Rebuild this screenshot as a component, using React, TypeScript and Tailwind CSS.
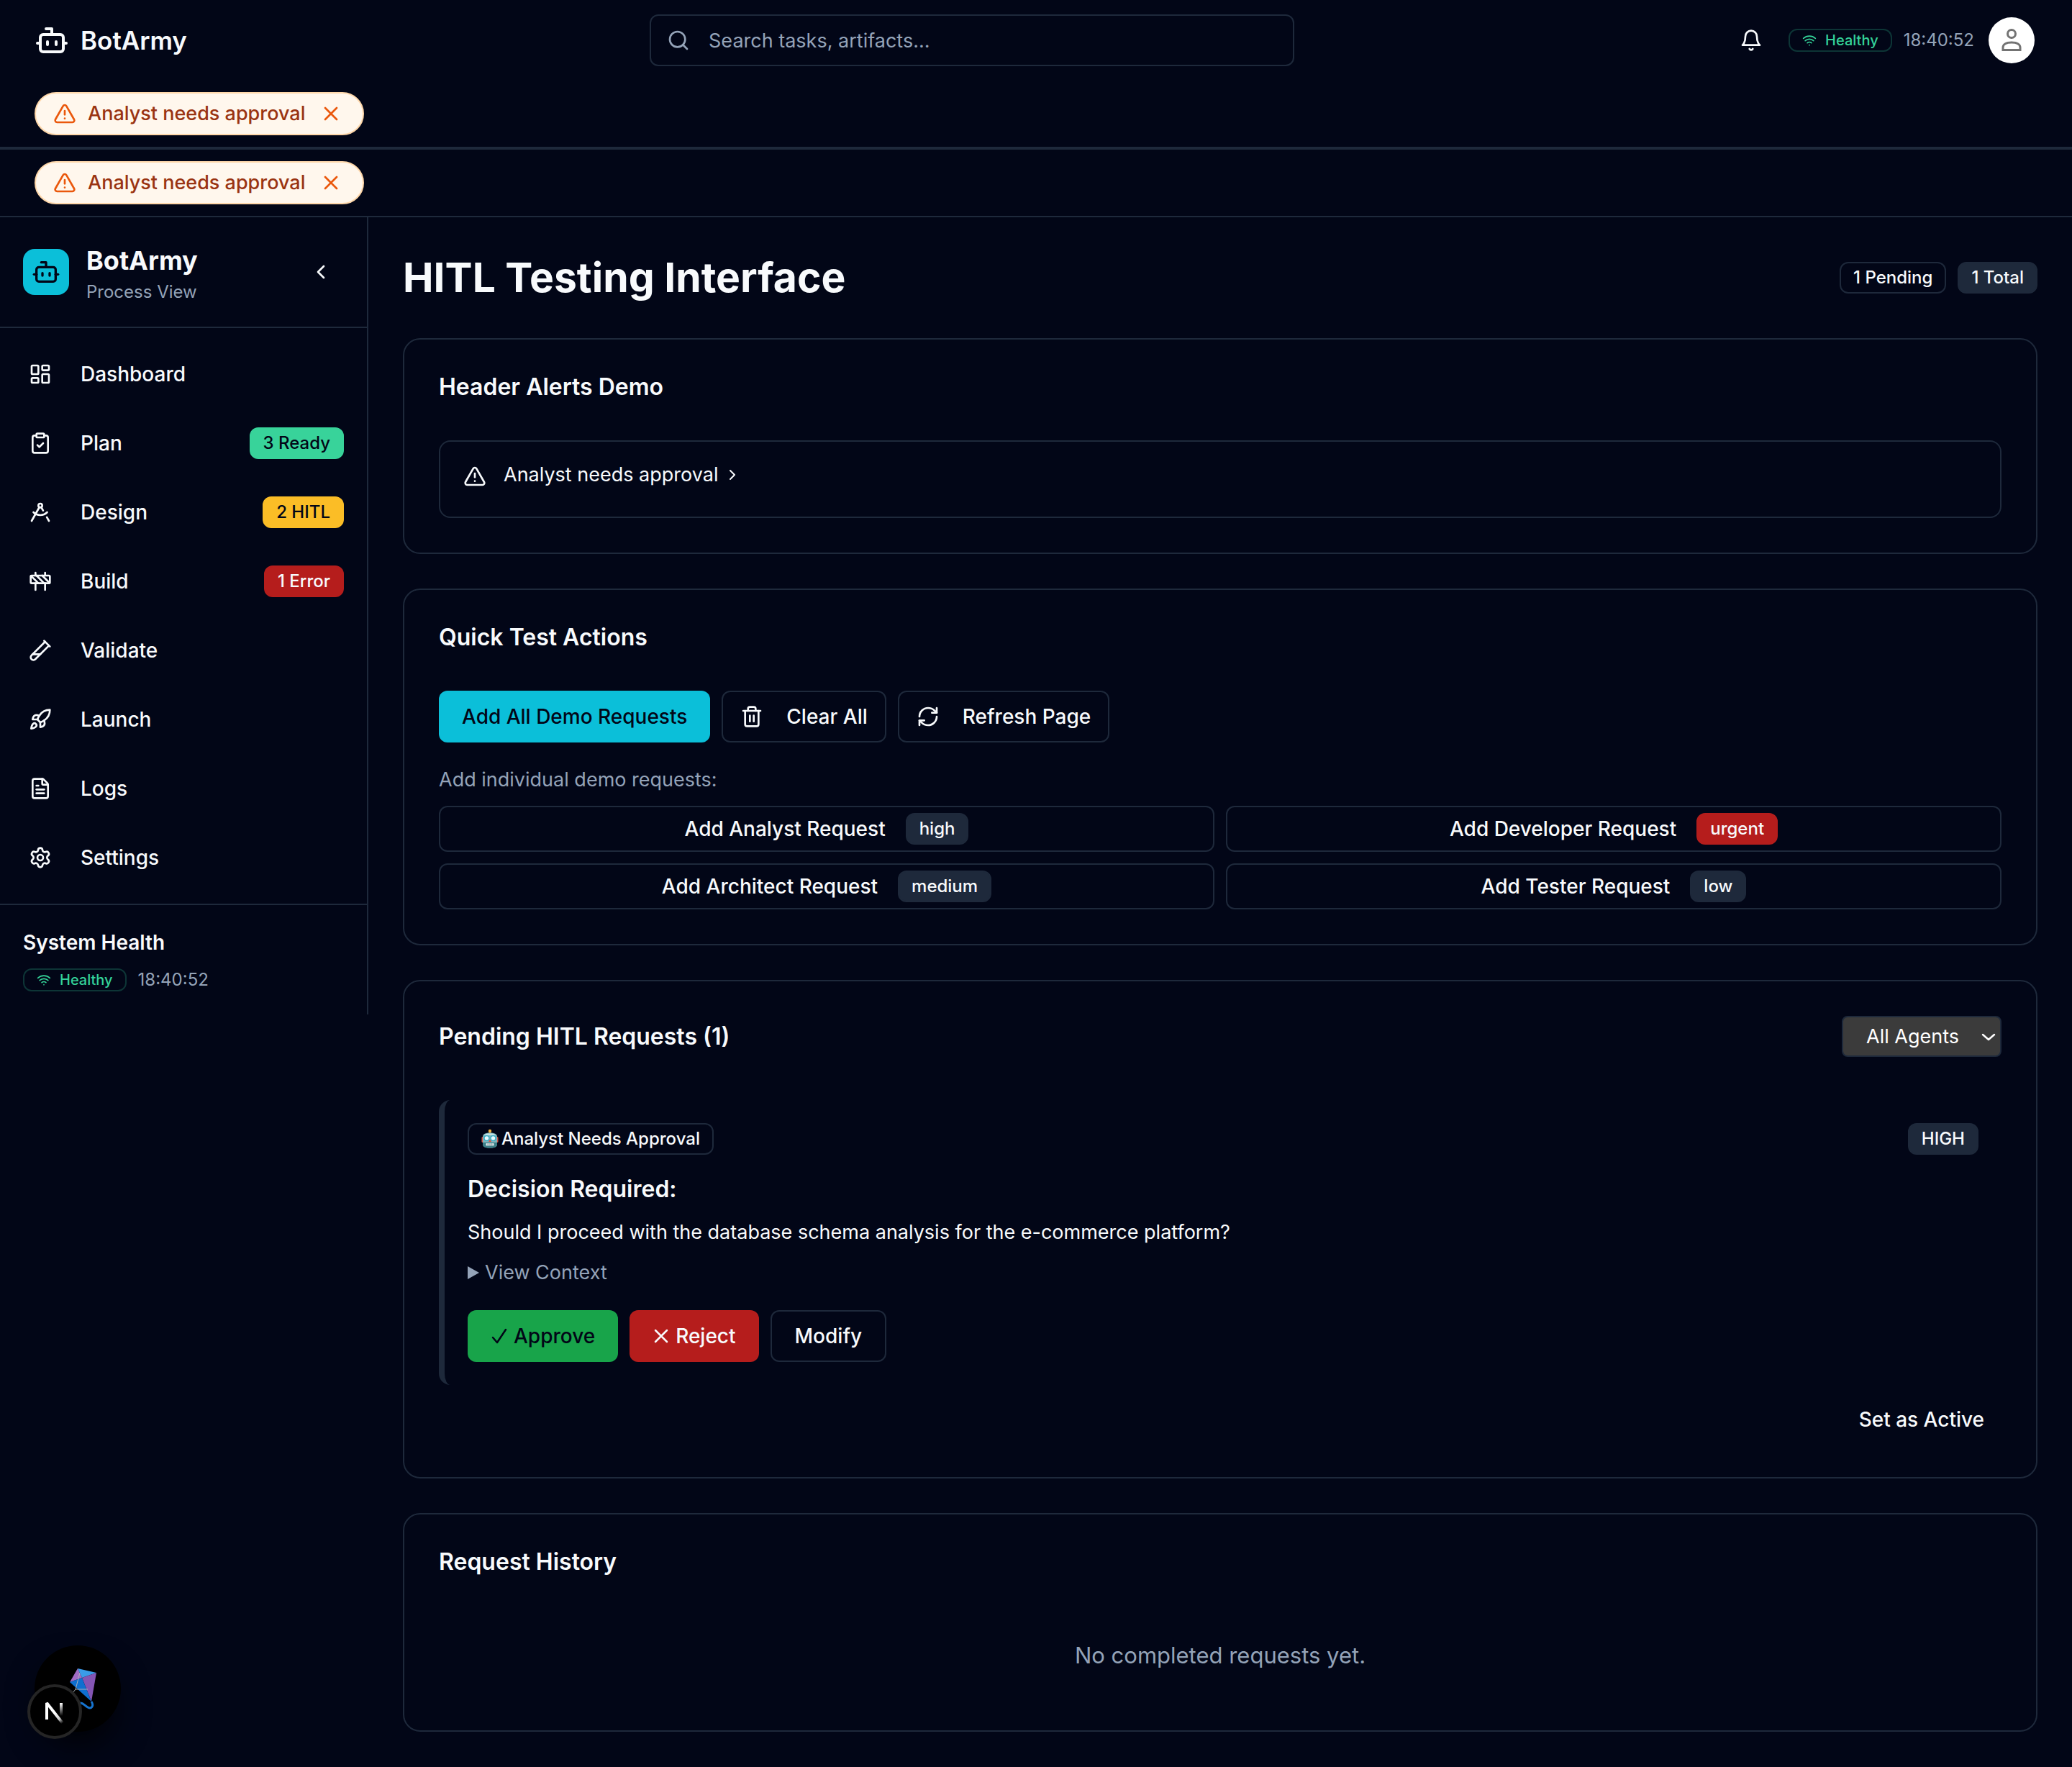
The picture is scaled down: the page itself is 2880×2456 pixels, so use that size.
import React from "react";
import {
  Bot,
  ChevronLeft,
  ChevronRight,
  ClipboardCheck,
  Construction,
  DraftingCompass,
  FileText,
  LayoutDashboard,
  RefreshCw,
  Rocket,
  Search,
  Settings,
  TestTubeDiagonal,
  Trash2,
  TriangleAlert,
  Wifi,
  X,
} from "lucide-react";

const badgeBase =
  "inline-flex h-11 shrink-0 items-center justify-center rounded-xl border-2 px-[17px] text-[24px] leading-8 font-medium whitespace-nowrap";

const badgeTones = {
  outline: "border-[#1e293b] text-slate-50",
  muted: "border-[#1e293b] bg-[#1e293b] text-slate-50",
  danger: "border-[#b51d1c] bg-[#b51d1c] text-slate-50",
  success: "border-[#38d39a] bg-[#38d39a] text-[#020617]",
  warning: "border-[#fbbd26] bg-[#fbbd26] text-[#020617]",
};

type Tone = keyof typeof badgeTones;

function Badge({ tone, children }: { tone: Tone; children: React.ReactNode }) {
  return <span className={`${badgeBase} ${badgeTones[tone]}`}>{children}</span>;
}

function HealthStatus() {
  return (
    <div className="flex items-center gap-4">
      <span className="inline-flex h-8 items-center gap-3 rounded-xl border-2 border-[#0d3536] px-[17px] text-[20px] leading-7 font-medium text-[#34d399]">
        <Wifi className="size-5" aria-hidden="true" />
        Healthy
      </span>
      <time className="text-[24px] leading-8 text-[#94a3b8]">18:40:52</time>
    </div>
  );
}

function AlertPill() {
  return (
    <div className="flex border-b-2 border-[#1e293b] px-12 py-4">
      <div
        role="alert"
        className="flex items-center gap-4 rounded-full border-2 border-[#fed7aa] bg-[#fff7ed] px-6 py-2 text-[27px] leading-10 font-medium text-[#9a3412]"
      >
        <TriangleAlert className="size-8 text-[#ea580c]" aria-hidden="true" />
        Analyst needs approval
        <button type="button" aria-label="Dismiss alert" className="flex size-10 items-center justify-center text-[#ea580c]">
          <X className="size-8" />
        </button>
      </div>
    </div>
  );
}

function BellIcon() {
  return (
    <svg viewBox="0 0 24 24" className="size-8" fill="none" stroke="currentColor" strokeWidth="2" strokeLinecap="round" strokeLinejoin="round" aria-hidden="true">
      <path d="M6 8a6 6 0 0 1 12 0c0 7 3 9 3 9H3s3-2 3-9" />
      <path d="M10.3 21a1.94 1.94 0 0 0 3.4 0" />
    </svg>
  );
}

function PersonIcon() {
  return (
    <svg viewBox="0 0 32 32" className="size-8" fill="none" stroke="#737373" strokeWidth="3" aria-hidden="true">
      <circle cx="16" cy="7" r="5.5" />
      <path d="M4 29.5V26c0-4 4-7 12-7s12 3 12 7v3.5z" />
    </svg>
  );
}

function Header() {
  return (
    <header className="border-b-2 border-[#1e293b]">
      <div className="flex h-28 items-center justify-between px-12">
        <a href="#home" className="flex w-65 items-center gap-4 text-[35px] leading-10 font-semibold text-slate-50">
          <Bot className="size-12" aria-hidden="true" />
          BotArmy
        </a>
        <div className="relative w-full max-w-4xl">
          <Search className="absolute top-5 left-6 size-8 text-[#94a3b8]" aria-hidden="true" />
          <input
            type="search"
            aria-label="Search"
            placeholder="Search tasks, artifacts..."
            className="h-18 w-full rounded-xl border-2 border-[#1e293b] bg-transparent pr-6 pl-20 text-[27px] text-slate-50 placeholder:text-[#94a3b8]"
          />
        </div>
        <div className="flex items-center pr-1">
          <button type="button" aria-label="Notifications" className="mr-3 flex size-20 items-center justify-center text-slate-50">
            <BellIcon />
          </button>
          <HealthStatus />
          <button type="button" aria-label="Account" className="ml-5 flex size-16 items-center justify-center rounded-full bg-white">
            <PersonIcon />
          </button>
        </div>
      </div>
      <AlertPill />
    </header>
  );
}

const navItems: { label: string; icon: React.ElementType; badge?: string; tone?: Tone }[] = [
  { label: "Dashboard", icon: LayoutDashboard },
  { label: "Plan", icon: ClipboardCheck, badge: "3 Ready", tone: "success" },
  { label: "Design", icon: DraftingCompass, badge: "2 HITL", tone: "warning" },
  { label: "Build", icon: Construction, badge: "1 Error", tone: "danger" },
  { label: "Validate", icon: TestTubeDiagonal },
  { label: "Launch", icon: Rocket },
  { label: "Logs", icon: FileText },
  { label: "Settings", icon: Settings },
];

function Sidebar() {
  return (
    <aside className="w-lg shrink-0 border-r-2 border-[#1e293b]">
      <div className="flex items-center gap-6 border-b-2 border-[#1e293b] p-8">
        <div className="flex size-16 items-center justify-center rounded-2xl bg-[#0bbfd9] text-[#020617]">
          <Bot className="size-10" aria-hidden="true" />
        </div>
        <div className="flex-1">
          <p className="text-[36px] leading-14 font-bold text-slate-50">BotArmy</p>
          <p className="text-[24px] leading-8 text-[#94a3b8]">Process View</p>
        </div>
        <button type="button" aria-label="Collapse sidebar" className="flex size-16 items-center justify-center text-slate-50">
          <ChevronLeft className="size-8" />
        </button>
      </div>
      <nav className="flex flex-col gap-4 py-6">
        {navItems.map(({ label, icon: Icon, badge, tone }) => (
          <a key={label} href={`#${label.toLowerCase()}`} className="flex h-20 items-center gap-10 pr-8 pl-10 text-[28px] leading-10 font-medium text-slate-50">
            <Icon className="size-8" aria-hidden="true" />
            <span className="flex-1">{label}</span>
            {badge && tone && <Badge tone={tone}>{badge}</Badge>}
          </a>
        ))}
      </nav>
      <div className="flex flex-col gap-4 border-t-2 border-[#1e293b] p-8">
        <h2 className="text-[28px] leading-10 font-semibold text-slate-50">System Health</h2>
        <HealthStatus />
      </div>
    </aside>
  );
}

const cardClass = "rounded-3xl border-2 border-[#1e293b] p-12";
const cardTitle = "text-[32px] leading-9 font-semibold text-slate-50";
const buttonBase =
  "inline-flex items-center justify-center rounded-xl text-[28px] leading-10 font-medium whitespace-nowrap";

const demoRequests: { label: string; priority: string; tone: Tone }[] = [
  { label: "Add Analyst Request", priority: "high", tone: "muted" },
  { label: "Add Developer Request", priority: "urgent", tone: "danger" },
  { label: "Add Architect Request", priority: "medium", tone: "muted" },
  { label: "Add Tester Request", priority: "low", tone: "muted" },
];

function RobotFace() {
  return (
    <svg viewBox="0 0 24 28" className="h-7 w-6" aria-hidden="true">
      <rect x="10.5" y="2" width="3" height="5" fill="#c9812f" />
      <circle cx="12" cy="3" r="2.2" fill="#f2b13a" />
      <rect x="0.5" y="11" width="3" height="8" rx="1.5" fill="#d0584a" />
      <rect x="20.5" y="11" width="3" height="8" rx="1.5" fill="#d0584a" />
      <path d="M2 11c0-4 4-5.500 10-5.500s10 1.500 10 5.500v10c0 4-3 5.500-10 5.500S2 25 2 21z" fill="#7fb4bb" />
      <path d="M2 19h20v2c0 4-3 5.500-10 5.500S2 25 2 21z" fill="#3c7f88" />
      <path d="M4 9c1-2 4-2.500 8-2.500s7 .5 8 2.500z" fill="#c3e2e4" />
      <circle cx="7.500" cy="13" r="3.400" fill="#e9fbff" stroke="#2aa9c4" strokeWidth="1.200" />
      <circle cx="16.500" cy="13" r="3.400" fill="#e9fbff" stroke="#2aa9c4" strokeWidth="1.200" />
      <path d="M12 14.500l1.800 3.500h-3.600z" fill="#d94a3d" />
      <rect x="6.500" y="20" width="11" height="3.600" rx="1" fill="#e4eef0" />
      <path d="M9.200 20v3.600M12 20v3.600M14.800 20v3.600" stroke="#4b6b70" strokeWidth="0.800" />
    </svg>
  );
}

function PendingRequest() {
  return (
    <article className="rounded-2xl border-l-8 border-[#1e293b] p-8">
      <div className="flex items-center justify-between">
        <Badge tone="outline">
          <span className="flex items-center gap-1">
            <RobotFace />
            Analyst Needs Approval
          </span>
        </Badge>
        <Badge tone="muted">HIGH</Badge>
      </div>
      <h3 className="mt-6 text-[32px] leading-12 font-semibold text-slate-50">Decision Required:</h3>
      <p className="mt-4 text-[27px] leading-10 text-slate-50">
        Should I proceed with the database schema analysis for the e-commerce platform?
      </p>
      <details className="mt-4 text-[27px] leading-10 text-[#94a3b8]">
        <summary className="flex cursor-pointer list-none items-center gap-2">
          <svg viewBox="0 0 16 20" className="h-5 w-4" fill="currentColor" aria-hidden="true">
            <path d="M0 1l16 9-16 9z" />
          </svg>
          View Context
        </summary>
        <p>Database schema analysis</p>
      </details>
      <div className="mt-8 flex gap-4">
        <button type="button" className={`${buttonBase} h-18 gap-2 bg-[#18a44a] px-8 text-[#020617]`}>
          <svg viewBox="0 0 24 24" className="size-6" fill="none" stroke="currentColor" strokeWidth="2.500" strokeLinecap="round" strokeLinejoin="round" aria-hidden="true">
            <path d="M3 14l6 7L21 3" />
          </svg>
          Approve
        </button>
        <button type="button" className={`${buttonBase} h-18 gap-2 bg-[#b51d1c] px-8 text-slate-50`}>
          <svg viewBox="0 0 24 24" className="size-6" fill="none" stroke="currentColor" strokeWidth="2.500" strokeLinecap="round" aria-hidden="true">
            <path d="M4 4l16 16M20 4L4 20" />
          </svg>
          Reject
        </button>
        <button type="button" className={`${buttonBase} h-18 border-2 border-[#1e293b] px-8 text-slate-50`}>
          Modify
        </button>
      </div>
    </article>
  );
}

function Main() {
  return (
    <main className="flex min-w-0 flex-1 flex-col gap-12 p-12">
      <div className="flex items-center justify-between">
        <h1 className="text-[57px] leading-18 font-bold text-slate-50">HITL Testing Interface</h1>
        <div className="flex gap-4">
          <Badge tone="outline">1 Pending</Badge>
          <Badge tone="muted">1 Total</Badge>
        </div>
      </div>

      <section className={cardClass}>
        <h2 className={cardTitle}>Header Alerts Demo</h2>
        <div className="mt-14 flex h-27 items-start gap-6 rounded-2xl border-2 border-[#1e293b] p-8 text-slate-50">
          <TriangleAlert className="size-8" aria-hidden="true" />
          <a href="#alert" className="flex items-center gap-2 text-[27px] leading-7">
            Analyst needs approval
            <ChevronRight className="size-6" aria-hidden="true" />
          </a>
        </div>
      </section>

      <section className={cardClass}>
        <h2 className={cardTitle}>Quick Test Actions</h2>
        <div className="mt-14 flex gap-4">
          <button type="button" className={`${buttonBase} h-18 bg-[#0bbfd9] px-8 text-[#020617]`}>
            Add All Demo Requests
          </button>
          <button type="button" className={`${buttonBase} h-18 gap-8 border-2 border-[#1e293b] px-6 text-slate-50`}>
            <Trash2 className="size-8" aria-hidden="true" />
            Clear All
          </button>
          <button type="button" className={`${buttonBase} h-18 gap-8 border-2 border-[#1e293b] px-6 text-slate-50`}>
            <RefreshCw className="size-8" aria-hidden="true" />
            Refresh Page
          </button>
        </div>
        <p className="mt-8 text-[27px] leading-10 text-[#94a3b8]">Add individual demo requests:</p>
        <div className="mt-4 grid grid-cols-2 gap-4">
          {demoRequests.map(({ label, priority, tone }) => (
            <button key={label} type="button" className={`${buttonBase} h-16 gap-7 border-2 border-[#1e293b] text-slate-50`}>
              {label}
              <Badge tone={tone}>{priority}</Badge>
            </button>
          ))}
        </div>
      </section>

      <section className={cardClass}>
        <div className="flex items-center justify-between">
          <h2 className={cardTitle}>Pending HITL Requests (1)</h2>
          <div className="relative">
            <select
              aria-label="Filter by agent"
              className="block h-[57px] appearance-none rounded-lg border-2 border-[#1e293b] bg-[#3b3b3b] pr-14 pl-8 text-[27px] leading-10 text-white"
            >
              <option>All Agents</option>
            </select>
            <svg viewBox="0 0 20 12" className="pointer-events-none absolute top-6 right-2 h-3 w-5" fill="none" stroke="white" strokeWidth="2.500" strokeLinecap="round" strokeLinejoin="round" aria-hidden="true">
              <path d="M2 2l8 7 8-7" />
            </svg>
          </div>
        </div>
        <div className="mt-15">
          <PendingRequest />
        </div>
        <div className="mt-4 flex justify-end">
          <button type="button" className={`${buttonBase} h-16 px-6 text-slate-50`}>
            Set as Active
          </button>
        </div>
      </section>

      <section className={cardClass}>
        <h2 className={cardTitle}>Request History</h2>
        <p className="mt-14 py-8 text-center text-[31px] leading-12 text-[#94a3b8]">No completed requests yet.</p>
      </section>
    </main>
  );
}

function KiteIcon() {
  return (
    <svg viewBox="0 0 40 60" className="h-15 w-10" aria-hidden="true">
      <path d="M12 2l6 13L1 21z" fill="#a06bc4" />
      <path d="M12 2l26 6-20 7z" fill="#3a9be8" />
      <path d="M38 8l-7 40-13-33z" fill="#8455b4" />
      <path d="M1 21l17-6 13 33z" fill="#0f6fd0" />
      <path d="M31 48c4 6 0 11-5 8s-7-7-11-6" fill="none" stroke="#1674cf" strokeWidth="3" />
      <path d="M15 8L9 31h17M9 31l-4 5" fill="none" stroke="#a9b0b8" strokeWidth="1" />
    </svg>
  );
}

function FloatingTools() {
  return (
    <div className="fixed bottom-[49px] left-12">
      <button type="button" aria-label="Open dev tools" className="flex size-30 items-center justify-center rounded-full bg-black pl-4 shadow-2xl shadow-black">
        <KiteIcon />
      </button>
      <button type="button" aria-label="Framework menu" className="absolute -bottom-2.5 -left-2.5 size-19 rounded-full border-4 border-[#252525] bg-black">
        <svg viewBox="0 0 68 68" className="size-17" fill="none" strokeWidth="4" aria-hidden="true">
          <defs>
            <linearGradient id="diag" gradientUnits="userSpaceOnUse" x1="34" y1="36" x2="45" y2="50">
              <stop stopColor="white" />
              <stop offset="0.6" stopColor="white" stopOpacity="0.8" />
              <stop offset="1" stopColor="white" stopOpacity="0" />
            </linearGradient>
            <linearGradient id="stem" gradientUnits="userSpaceOnUse" x1="43" y1="22" x2="43" y2="40">
              <stop stopColor="white" />
              <stop offset="1" stopColor="white" stopOpacity="0" />
            </linearGradient>
          </defs>
          <path d="M45 50L23 22V45" stroke="url(#diag)" strokeLinejoin="bevel" />
          <path d="M43 22V40" stroke="url(#stem)" />
        </svg>
      </button>
    </div>
  );
}

export default function App() {
  return (
    <div className="min-h-screen bg-[#020617] font-['Inter',sans-serif] text-slate-50">
      <Header />
      <AlertPill />
      <div className="flex items-start">
        <Sidebar />
        <Main />
      </div>
      <FloatingTools />
    </div>
  );
}
